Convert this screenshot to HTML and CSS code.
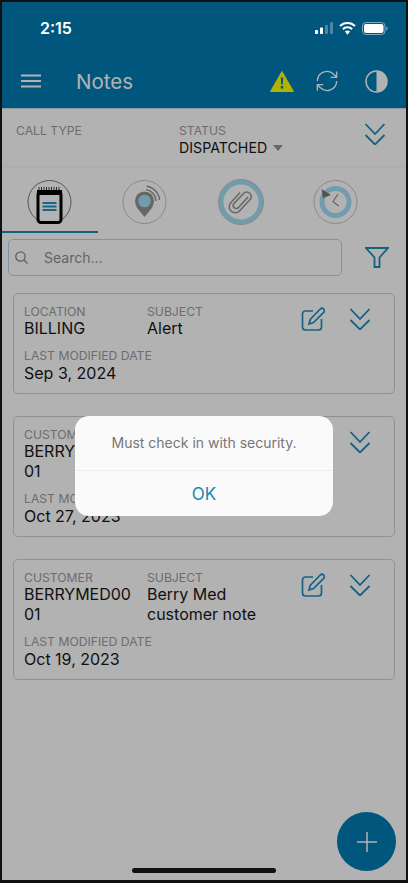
FILE: index.html
```html
<!DOCTYPE html>
<html>
<head>
  <meta charset="UTF-8" />
  <title>Notes</title>
  <link rel="stylesheet" href="styles.css">
</head>
<body>
  <svg class="defs" width="0" height="0">
    <symbol id="chevrons" viewBox="0 0 22 22">
      <path d="M1.500 1 11 11 20.500 1M1.500 12 11 21.500 20.500 12" />
    </symbol>
    <symbol id="edit" viewBox="0 0 24 24">
      <path d="M12 4H4.500A3 3 0 0 0 1.500 7V20A3 3 0 0 0 4.500 23H17.500A3 3 0 0 0 20.500 20V12" />
      <path d="M19.300 2A2.400 2.400 0 0 1 22.700 5.400L12.500 15.600 8 17 9.400 12.200Z" />
    </symbol>
  </svg>

  <div class="phone">
    <header class="app_header">
      <div class="status_bar">
        <span class="clock">2:15</span>
        <div class="status_icons">
          <svg width="18" height="12" viewBox="0 0 18 12">
            <rect x="0" y="8" width="3" height="4" rx=".7" fill="#fff" />
            <rect x="5" y="5.500" width="3" height="6.500" rx=".7" fill="#fff" />
            <rect x="10" y="3" width="3" height="9" rx=".7" fill="#4f86a5" />
            <rect x="15" y="0" width="3" height="12" rx=".7" fill="#4f86a5" />
          </svg>
          <svg width="17" height="13" viewBox="0 0 17 13">
            <path d="M8.500 0C5.300 0 2.400 1.200.3 3.300L1.700 4.800C3.500 3.100 5.900 2 8.500 2S13.500 3.100 15.300 4.800L16.700 3.300C14.600 1.200 11.700 0 8.500 0Z" fill="#fff" />
            <path d="M8.500 4.200C6.500 4.200 4.600 5 3.200 6.400L4.600 7.900C5.600 6.900 7 6.300 8.500 6.300S11.400 6.900 12.400 7.900L13.800 6.400C12.400 5 10.500 4.200 8.500 4.200Z" fill="#fff" />
            <path d="M8.500 8.400C7.500 8.400 6.600 8.800 5.900 9.500L8.500 12.800 11.100 9.500C10.400 8.800 9.500 8.400 8.500 8.400Z" fill="#fff" />
          </svg>
          <svg width="26" height="13" viewBox="0 0 26 13">
            <rect x=".5" y=".5" width="22.500" height="12" rx="3.500" fill="none" stroke="#7fa9c0" />
            <rect x="2" y="2" width="19.500" height="9" rx="2" fill="#fff" />
            <path d="M24.300 4.500C25.200 4.800 25.700 5.600 25.700 6.500S25.200 8.200 24.300 8.500Z" fill="#7fa9c0" />
          </svg>
        </div>
      </div>
      <div class="toolbar">
        <svg class="menu_icon" width="20" height="14" viewBox="0 0 20 14">
          <path d="M0 1.500H20M0 7H20M0 12.500H20" />
        </svg>
        <h1 class="page_title">Notes</h1>
        <div class="toolbar_icons">
          <svg width="24" height="21" viewBox="0 0 24 21">
            <path d="M12 .5 23.500 20.500H.5Z" fill="#ffff00" stroke="#ffff00" stroke-linejoin="round" />
            <path d="M10.800 6.500H13.200L12.800 13.500H11.200ZM10.800 15H13.200V17.500H10.800Z" fill="#007bb3" />
          </svg>
          <svg class="sync_icon" width="22" height="22" viewBox="0 0 24 24">
            <path d="M1.500 12A10.500 10.500 0 0 1 19.500 4.800L22.500 8M22.500 1.500V8H16M22.500 12A10.500 10.500 0 0 1 4.500 19.200L1.500 16M1.500 22.500V16H8" />
          </svg>
          <svg width="23" height="23" viewBox="0 0 23 23">
            <circle cx="11.500" cy="11.500" r="10.500" fill="none" stroke="#fff" stroke-width="1.500" />
            <path d="M11.500 1A10.500 10.500 0 0 1 11.500 22Z" fill="#fff" />
          </svg>
        </div>
      </div>
    </header>

    <section class="filters">
      <div class="filter_col filter_type">
        <div class="label">CALL TYPE</div>
      </div>
      <div class="filter_col">
        <div class="label">STATUS</div>
        <div class="status_value">DISPATCHED <span class="caret"></span></div>
      </div>
      <svg class="chevron_icon filter_toggle" width="22" height="22"><use href="#chevrons" /></svg>
    </section>

    <nav class="tabs">
      <div class="tab active">
        <svg width="46" height="48" viewBox="0 0 46 48">
          <circle cx="22.500" cy="23" r="21.500" fill="none" stroke="#7a7a7a" />
          <path d="M12 11V8M14.500 11V8M17 11V8M19.500 11V8M22 11V8M24.500 11V8M27 11V8M29.500 11V8M32 11V8" stroke="#444" />
          <rect x="11" y="12.500" width="23" height="31" rx="3" fill="#fff" stroke="#000" stroke-width="3" />
          <rect x="10" y="11" width="25" height="5" fill="#000" />
          <path d="M15.500 24H29.500M15.500 27.500H29.500M15.500 31H29.500" stroke="#1e95c5" stroke-width="2" />
        </svg>
      </div>
      <div class="tab">
        <svg width="46" height="46" viewBox="0 0 46 46">
          <circle cx="22.500" cy="23" r="21.500" fill="none" stroke="#c4c4c4" />
          <path d="M22.500 38 14 27.500H31Z" fill="#929292" />
          <circle cx="22.500" cy="22" r="9.500" fill="#929292" />
          <circle cx="22.500" cy="22" r="6.300" fill="#a4e0f5" />
          <path d="M24 10.600A11.500 11.500 0 0 1 34 22M24.500 7.200A15 15 0 0 1 37.500 21" fill="none" stroke="#929292" stroke-width="1.400" />
        </svg>
      </div>
      <div class="tab">
        <svg width="46" height="46" viewBox="0 0 46 46">
          <circle cx="23" cy="23" r="20" fill="none" stroke="#a4e0f5" stroke-width="5" />
          <circle cx="23" cy="23" r="22.500" fill="none" stroke="#c4c4c4" />
          <path d="M30 18 20.500 28.500A3 3 0 0 1 16 24.500L26 14A4.500 4.500 0 0 1 32.500 20L21.500 32A6 6 0 0 1 13 23.500L22 13.500" fill="none" stroke="#929292" stroke-width="1.500" />
        </svg>
      </div>
      <div class="tab">
        <svg width="46" height="46" viewBox="0 0 46 46">
          <circle cx="22.500" cy="23" r="21.500" fill="none" stroke="#c4c4c4" />
          <circle cx="22.500" cy="23" r="13.500" fill="none" stroke="#a4e0f5" stroke-width="5" />
          <path d="M8.500 10 18 16 10 19Z" fill="#787878" />
          <path d="M25 15 20 22.700 25.700 27" fill="none" stroke="#929292" stroke-width="1.200" />
        </svg>
      </div>
    </nav>

    <div class="search_row">
      <div class="search_box">
        <svg class="search_icon" width="13" height="13" viewBox="0 0 13 13">
          <circle cx="5.500" cy="5.500" r="4.700" />
          <path d="M9 9 12.500 12.500" />
        </svg>
        <span class="search_text">Search...</span>
      </div>
      <svg class="filter_icon" width="24" height="21" viewBox="0 0 24 21">
        <path d="M1 1H23L14.500 10.500V20H9.500V10.500Z" />
      </svg>
    </div>

    <main class="note_list">
      <article class="note_card">
        <div class="note_col">
          <div class="label">LOCATION</div>
          <div class="value">BILLING</div>
        </div>
        <div class="note_col">
          <div class="label">SUBJECT</div>
          <div class="value">Alert</div>
        </div>
        <div class="note_actions">
          <svg class="edit_icon" width="24" height="24"><use href="#edit" /></svg>
          <svg class="chevron_icon" width="22" height="22"><use href="#chevrons" /></svg>
        </div>
        <div class="note_date">
          <div class="label">LAST MODIFIED DATE</div>
          <div class="value">Sep 3, 2024</div>
        </div>
      </article>

      <article class="note_card">
        <div class="note_col">
          <div class="label">CUSTOMER</div>
          <div class="value">BERRYMED0001</div>
        </div>
        <div class="note_col"></div>
        <div class="note_actions">
          <svg class="edit_icon" width="24" height="24"><use href="#edit" /></svg>
          <svg class="chevron_icon" width="22" height="22"><use href="#chevrons" /></svg>
        </div>
        <div class="note_date">
          <div class="label">LAST MODIFIED DATE</div>
          <div class="value">Oct 27, 2023</div>
        </div>
      </article>

      <article class="note_card">
        <div class="note_col">
          <div class="label">CUSTOMER</div>
          <div class="value">BERRYMED0001</div>
        </div>
        <div class="note_col">
          <div class="label">SUBJECT</div>
          <div class="value">Berry Med customer note</div>
        </div>
        <div class="note_actions">
          <svg class="edit_icon" width="24" height="24"><use href="#edit" /></svg>
          <svg class="chevron_icon" width="22" height="22"><use href="#chevrons" /></svg>
        </div>
        <div class="note_date">
          <div class="label">LAST MODIFIED DATE</div>
          <div class="value">Oct 19, 2023</div>
        </div>
      </article>
    </main>

    <button class="fab">
      <svg width="20" height="20" viewBox="0 0 20 20"><path d="M10 0V20M0 10H20" /></svg>
    </button>

    <div class="scrim"></div>

    <div class="alert">
      <p class="alert_text">Must check in with security.</p>
      <div class="alert_button">OK</div>
    </div>

    <div class="home_bar"></div>
  </div>
</body>
</html>
```

FILE: styles.css
```css
* {
  box-sizing: border-box;
}

body {
  margin: 0;
  background: #000;
  font-family: Inter, "Noto Sans", sans-serif;
}

.defs {
  position: absolute;
}

.phone {
  position: relative;
  width: 408px;
  height: 883px;
  border: 2px solid #111;
  border-bottom-width: 3px;
  background: #fff;
  overflow: hidden;
}

/* header */
.app_header {
  height: 107px;
  background: #007bb3;
  border-bottom: 1px solid #cfe0e8;
}

.status_bar {
  position: relative;
  z-index: 3;
  display: flex;
  align-items: center;
  justify-content: space-between;
  height: 52px;
  padding: 0 18px 0 38px;
  color: #fff;
}

.clock {
  font-size: 16px;
  font-weight: 600;
}

.status_icons {
  display: flex;
  align-items: center;
  gap: 6px;
}

.toolbar {
  display: flex;
  align-items: center;
  height: 54px;
  padding: 0 18px 0 19px;
}

.menu_icon path {
  stroke: #fff;
  stroke-width: 1.800;
  fill: none;
}

.page_title {
  margin: 0 0 0 35px;
  font-size: 20.500px;
  font-weight: 400;
  color: #fff;
}

.toolbar_icons {
  display: flex;
  align-items: center;
  gap: 23px;
  margin-left: auto;
}

.toolbar_icons svg:first-child {
  margin-right: -1px;
}

.toolbar_icons svg:last-child {
  margin-left: 4px;
}

.sync_icon path {
  fill: none;
  stroke: #fff;
  stroke-width: 1.500;
}

/* filters */
.filters {
  display: flex;
  height: 57px;
  padding: 14px 20px 0 14px;
  box-shadow: 0 1px 3px rgba(0, 0, 0, .06);
}

.filter_type {
  width: 163px;
}

.label {
  height: 16px;
  font-size: 12.200px;
  line-height: 16px;
  color: #9c9c9c;
}

.status_value {
  font-size: 14.200px;
  line-height: 18px;
  color: #181818;
}

.caret {
  display: inline-block;
  margin-left: 2px;
  border-left: 5px solid transparent;
  border-right: 5px solid transparent;
  border-top: 6px solid #929292;
  vertical-align: 2px;
}

.chevron_icon {
  fill: none;
  stroke: #1c8ab8;
  stroke-width: 1.800;
  flex-shrink: 0;
}

.filter_toggle {
  margin: 0 0 0 auto;
}

/* tabs */
.tabs {
  display: grid;
  grid-template-columns: repeat(4, 95.500px);
  height: 67px;
}

.tab {
  display: flex;
  justify-content: center;
  padding-top: 13px;
}

.tab svg {
  flex-shrink: 0;
  overflow: visible;
}

.tab.active {
  border-bottom: 2px solid #1c8ab8;
}

.search_row {
  display: flex;
  align-items: center;
  height: 37px;
  margin-top: 6px;
  padding: 0 17px 0 6px;
}

.search_box {
  display: flex;
  align-items: center;
  width: 334px;
  height: 37px;
  padding-left: 6px;
  border: 1px solid #a9d8ea;
  border-radius: 5px;
}

.search_icon {
  fill: none;
  stroke: #8a8a8a;
  stroke-width: 1.300;
}

.search_text {
  margin-left: 16px;
  font-size: 14px;
  color: #8f8f8f;
}

.filter_icon {
  margin-left: auto;
  fill: none;
  stroke: #1c8ab8;
  stroke-width: 1.800;
}

/* note cards */
.note_list {
  display: flex;
  flex-direction: column;
  gap: 22px;
  margin-top: 17px;
  padding: 0 11px;
}

.note_card {
  display: grid;
  grid-template-columns: 123px 146px 1fr;
  row-gap: 10px;
  padding: 10px 0 10px 10px;
  border: 1px solid #d0d0d0;
  border-radius: 5px;
}

.note_col {
  padding-right: 10px;
}

.note_card .value {
  margin-top: -1px;
  font-size: 16px;
  line-height: 20px;
  color: #181818;
  overflow-wrap: anywhere;
}

.note_col .value {
  margin-top: -2px;
}

.note_actions {
  display: flex;
  align-items: flex-start;
  gap: 24px;
  margin-left: 8px;
  margin-top: 3px;
}

.note_actions .chevron_icon {
  margin-top: 1px;
}

.edit_icon {
  fill: none;
  stroke: #1f8fbf;
  stroke-width: 1.700;
  flex-shrink: 0;
}

.note_date {
  grid-column: 1 / -1;
}

/* floating button, dialog */
.fab {
  position: absolute;
  right: 10px;
  bottom: 9px;
  display: flex;
  align-items: center;
  justify-content: center;
  width: 59px;
  height: 59px;
  padding: 0;
  border: none;
  border-radius: 50%;
  background: #007bb3;
}

.fab path {
  stroke: #fff;
  stroke-width: 1.500;
}

.scrim {
  position: absolute;
  inset: 0;
  z-index: 1;
  background: rgba(0, 0, 0, .3);
}

.alert {
  position: absolute;
  top: 414px;
  left: 73px;
  z-index: 2;
  width: 258px;
  height: 100px;
  border-radius: 14px;
  background: #fafafa;
  text-align: center;
}

.alert_text {
  height: 55px;
  margin: 0;
  padding-top: 18px;
  border-bottom: 1px solid #eeeeee;
  font-size: 14px;
  line-height: 18px;
  color: #777;
}

.alert_button {
  font-size: 17px;
  line-height: 46px;
  color: #1488b5;
}

.home_bar {
  position: absolute;
  left: 130px;
  bottom: 7px;
  z-index: 3;
  width: 144px;
  height: 5px;
  border-radius: 3px;
  background: #111;
}
```
